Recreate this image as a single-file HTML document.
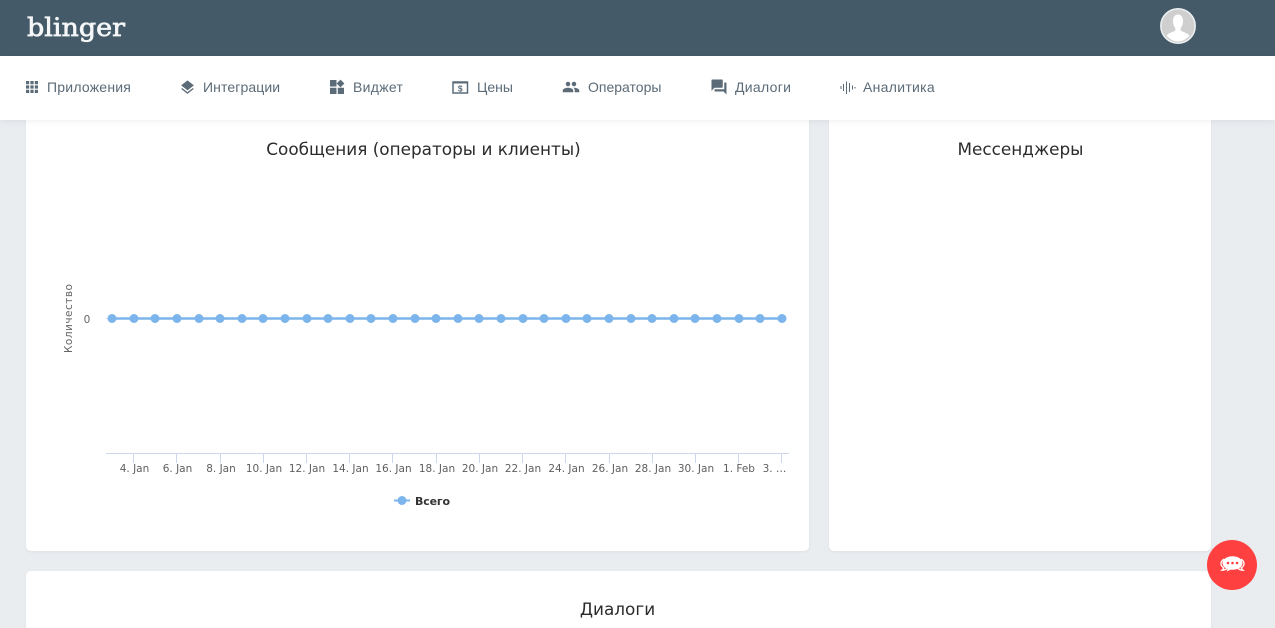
<!DOCTYPE html>
<html lang="ru">
<head>
<meta charset="utf-8">
<title>Blinger</title>
<style>
html,body{margin:0;padding:0;width:1275px;height:628px;overflow:hidden;background:#e9edf0;font-family:"Liberation Sans",sans-serif}
#wrap{position:relative;width:1275px;height:628px;overflow:hidden}
.abs{position:absolute}
#top{left:0;top:0;width:1275px;height:56px;background:#455a68}
#nav{left:0;top:56px;width:1275px;height:64px;background:#fff;box-shadow:0 2px 6px rgba(0,0,0,.05);z-index:3}
.item{position:absolute;top:0;height:62px;line-height:62px;font-size:14px;letter-spacing:.22px;color:#5b6b78;white-space:nowrap}
.ic{position:absolute;top:23px}
.card{position:absolute;background:#fff;border-radius:5px;box-shadow:0 1px 3px rgba(0,0,0,.05)}
.title{position:absolute;font-family:"DejaVu Sans",sans-serif;font-size:16.85px;color:#2b2b2b;text-align:center;white-space:nowrap}
#fab{left:1207px;top:540px;width:50px;height:50px;border-radius:50%;background:#ff4040;z-index:5}
</style>
</head>
<body>
<div id="wrap">
<div class="abs" id="top">
  <svg class="abs" style="left:20px;top:4px" width="120" height="48"><text x="7" y="32" font-family="DejaVu Serif,serif" font-size="25" fill="#f4f6f7" stroke="#f4f6f7" stroke-width=".7" textLength="98" lengthAdjust="spacingAndGlyphs">blinger</text></svg>
  <svg class="abs" style="left:1160px;top:8px" width="36" height="36" viewBox="0 0 36 36"><circle cx="18" cy="18" r="17.2" fill="#cfcfcf" stroke="#eef0f1" stroke-width="1.500"/><path d="M18 6.500c-3.300 0-5 2.700-5 6.500 0 3 .9 5.500 2.300 7v2.500c-2 1.500-6 2-8.800 5 2.800 3.500 6.800 6 11.500 6s8.700-2.500 11.500-6c-2.800-3-6.800-3.500-8.800-5v-2.500c1.400-1.500 2.300-4 2.300-7 0-3.800-1.700-6.500-5-6.500z" fill="#fff"/></svg>
</div>
<div class="abs" id="nav">
  <svg class="ic" style="left:24px;top:23px" width="16" height="16" viewBox="0 0 16 16" fill="#5b6b78"><path d="M2 2h3.200v3.200H2zM6.400 2h3.200v3.200H6.400zM10.800 2H14v3.200h-3.200zM2 6.400h3.200v3.200H2zM6.400 6.400h3.200v3.200H6.400zM10.800 6.400H14v3.200h-3.200zM2 10.800h3.200V14H2zM6.400 10.800h3.200V14H6.400zM10.800 10.800H14V14h-3.200z"/></svg>
  <div class="item" style="left:47px">Приложения</div>
  <svg class="ic" style="left:179px;top:23px" width="17" height="17" viewBox="0 0 24 24" fill="#5b6b78"><path d="M12 18.500 4.600 12.800 3 14l9 7 9-7-1.600-1.200zM12 16l9-7-9-7-9 7 7.400 5.700z"/></svg>
  <div class="item" style="left:203px;letter-spacing:.1px">Интеграции</div>
  <svg class="ic" style="left:329px;top:23px" width="16" height="16" viewBox="0 0 16 16" fill="#5b6b78"><path d="M1 1h6.500v6.500H1zM1 8.800h6.500V15H1zM8.800 8.800H15V15H8.800zM11.500.6 15.400 4.500l-3.900 3.900-3.900-3.900z"/></svg>
  <div class="item" style="left:353px;letter-spacing:.3px">Виджет</div>
  <svg class="ic" style="left:452px;top:24px" width="17" height="15" viewBox="0 0 17 15"><rect x="1" y="2" width="14.500" height="11" fill="none" stroke="#5b6b78" stroke-width="1.500"/><rect x="1" y="1.500" width="14.500" height="2" fill="#5b6b78"/><text x="8.300" y="11.500" text-anchor="middle" font-size="8.500" font-weight="bold" fill="#5b6b78" font-family="Liberation Sans,sans-serif">$</text></svg>
  <div class="item" style="left:477px;letter-spacing:0">Цены</div>
  <svg class="ic" style="left:562px;top:22px" width="18" height="18" viewBox="0 0 24 24" fill="#5b6b78"><path d="M16 11c1.700 0 3-1.300 3-3s-1.300-3-3-3-3 1.300-3 3 1.300 3 3 3zm-8 0c1.700 0 3-1.300 3-3S9.700 5 8 5 5 6.300 5 8s1.300 3 3 3zm0 2c-2.300 0-7 1.200-7 3.500V19h14v-2.500C15 14.200 10.300 13 8 13zm8 0h-1c1.200.8 2 1.900 2 3.500V19h6v-2.500c0-2.300-4.700-3.500-7-3.500z"/></svg>
  <div class="item" style="left:588px;letter-spacing:0">Операторы</div>
  <svg class="ic" style="left:710px;top:22px" width="18" height="18" viewBox="0 0 24 24" fill="#5b6b78"><path d="M21 6h-2v9H6v2c0 .5.500 1 1 1h11l4 4V7c0-.5-.5-1-1-1zm-4 6V3c0-.5-.5-1-1-1H3c-.5 0-1 .5-1 1v14l4-4h10c.5 0 1-.5 1-1z"/></svg>
  <div class="item" style="left:735px;letter-spacing:.3px">Диалоги</div>
  <svg class="ic" style="left:840px;top:23px" width="16" height="17" viewBox="0 0 16 17" stroke="#5b6b78" stroke-width="1" fill="none"><path d="M1 7v3M3.500 5v7M6.500 2.500v12.500M9.500 4v9M12.500 6.500v4M15 8v1.500"/></svg>
  <div class="item" style="left:863px;letter-spacing:.3px">Аналитика</div>
</div>

<div class="card" style="left:26px;top:100px;width:783px;height:451px"></div>
<div class="card" style="left:829px;top:100px;width:382px;height:451px"></div>
<div class="card" style="left:26px;top:571px;width:1185px;height:80px"></div>

<div class="title" style="left:26px;top:139px;width:795px">Сообщения (операторы и клиенты)</div>
<div class="title" style="left:829px;top:139px;width:383px">Мессенджеры</div>
<div class="title" style="left:25px;top:599px;width:1185px">Диалоги</div>

<svg class="abs" style="left:0;top:0" width="1275" height="628" viewBox="0 0 1275 628" font-family="DejaVu Sans,sans-serif">
  <text transform="translate(72,353) rotate(-90)" font-size="10.500" fill="#666" textLength="69">Количество</text>
  <text x="87" y="323" text-anchor="middle" font-size="10.500" fill="#666">0</text>
  <path d="M106 318.500H112" stroke="#e6e6e6" fill="none"/>
  <path d="M112 318.500H782" stroke="#7cb5ec" stroke-width="2.400" fill="none"/>
  <g fill="#7cb5ec">
    <circle cx="112" cy="318.500" r="4.500"/><circle cx="134" cy="318.500" r="4.500"/><circle cx="155" cy="318.500" r="4.500"/><circle cx="177" cy="318.500" r="4.500"/>
    <circle cx="199" cy="318.500" r="4.500"/><circle cx="220" cy="318.500" r="4.500"/><circle cx="242" cy="318.500" r="4.500"/><circle cx="263" cy="318.500" r="4.500"/>
    <circle cx="285" cy="318.500" r="4.500"/><circle cx="307" cy="318.500" r="4.500"/><circle cx="328" cy="318.500" r="4.500"/><circle cx="350" cy="318.500" r="4.500"/>
    <circle cx="371" cy="318.500" r="4.500"/><circle cx="393" cy="318.500" r="4.500"/><circle cx="415" cy="318.500" r="4.500"/><circle cx="436" cy="318.500" r="4.500"/>
    <circle cx="458" cy="318.500" r="4.500"/><circle cx="479" cy="318.500" r="4.500"/><circle cx="501" cy="318.500" r="4.500"/><circle cx="523" cy="318.500" r="4.500"/>
    <circle cx="544" cy="318.500" r="4.500"/><circle cx="566" cy="318.500" r="4.500"/><circle cx="587" cy="318.500" r="4.500"/><circle cx="609" cy="318.500" r="4.500"/>
    <circle cx="631" cy="318.500" r="4.500"/><circle cx="652" cy="318.500" r="4.500"/><circle cx="674" cy="318.500" r="4.500"/><circle cx="695" cy="318.500" r="4.500"/>
    <circle cx="717" cy="318.500" r="4.500"/><circle cx="739" cy="318.500" r="4.500"/><circle cx="760" cy="318.500" r="4.500"/><circle cx="782" cy="318.500" r="4.500"/>
  </g>
  <path d="M106 453.500H789M133.500 453v10M176.500 453v10M220.500 453v10M263.500 453v10M306.500 453v10M349.500 453v10M392.500 453v10M436.500 453v10M479.500 453v10M522.500 453v10M565.500 453v10M609.500 453v10M652.500 453v10M695.500 453v10M738.500 453v10M781.500 453v10" stroke="#ccd6eb" fill="none"/>
  <g font-size="10.500" fill="#5f5f5f" text-anchor="middle">
    <text x="134.500" y="472">4. Jan</text><text x="177.500" y="472">6. Jan</text><text x="221" y="472">8. Jan</text><text x="264" y="472">10. Jan</text>
    <text x="307" y="472">12. Jan</text><text x="350.500" y="472">14. Jan</text><text x="393.500" y="472">16. Jan</text><text x="437" y="472">18. Jan</text>
    <text x="480" y="472">20. Jan</text><text x="523" y="472">22. Jan</text><text x="566.500" y="472">24. Jan</text><text x="610" y="472">26. Jan</text>
    <text x="653" y="472">28. Jan</text><text x="696" y="472">30. Jan</text><text x="739" y="472">1. Feb</text><text x="774.500" y="472">3. …</text>
  </g>
  <path d="M394 500.500H410" stroke="#7cb5ec" stroke-width="2"/>
  <circle cx="402" cy="500.500" r="4.500" fill="#7cb5ec"/>
  <text x="415" y="505" font-size="11" font-weight="bold" fill="#333" textLength="35">Всего</text>
</svg>

<div class="abs" id="fab">
  <svg class="abs" style="left:12px;top:13px" width="27" height="24" viewBox="0 0 27 24"><path d="M5 6C2.800 7.500 1.700 9.300 2 11.300c.3 1.500 1.300 2.800 2.800 3.500-.3 1-1 1.800-1.800 2.400 2 0 3.700-.6 4.800-1.700" fill="none" stroke="#fff" stroke-width="1.300"/><path d="M22 6c2.200 1.500 3.300 3.300 3 5.300-.3 1.500-1.300 2.800-2.800 3.500.3 1 1 1.800 1.800 2.400-2 0-3.700-.6-4.800-1.700" fill="none" stroke="#fff" stroke-width="1.300"/><ellipse cx="13.500" cy="10" rx="10" ry="6.800" fill="#fff"/><path d="M9 15l-1.300 3.500 5.300-2.500z" fill="#fff"/><circle cx="9" cy="10" r="1.300" fill="#ff4040"/><circle cx="13.500" cy="10" r="1.300" fill="#ff4040"/><circle cx="18" cy="10" r="1.300" fill="#ff4040"/></svg>
</div>
</div>
</body>
</html>
